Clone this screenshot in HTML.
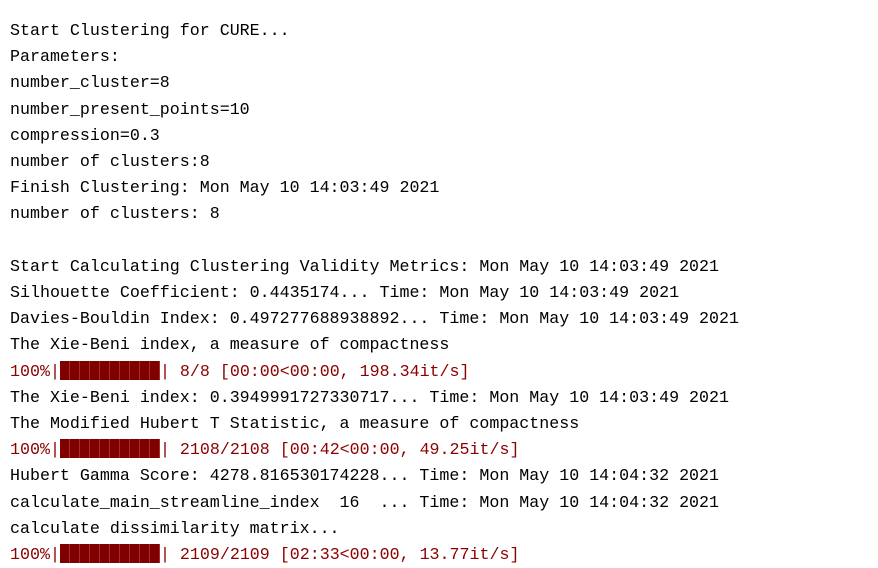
<!DOCTYPE html><html><head><style>
body{margin:0;background:#fff;width:878px;height:566px;overflow:hidden}
pre{margin:0;position:absolute;left:10px;top:18px;font-family:"Liberation Mono",monospace;font-size:16.65px;line-height:26.2px;color:#000}
.r{color:#8b0000}
.b{display:inline-block;width:100px;height:19px;vertical-align:-4px;background:repeating-linear-gradient(90deg,#800000 0,#800000 9px,#a03030 9px,#a03030 10px)}
</style></head><body><pre>Start Clustering for CURE...
Parameters:
number_cluster=8
number_present_points=10
compression=0.3
number of clusters:8
Finish Clustering: Mon May 10 14:03:49 2021
number of clusters: 8

Start Calculating Clustering Validity Metrics: Mon May 10 14:03:49 2021
Silhouette Coefficient: 0.4435174... Time: Mon May 10 14:03:49 2021
Davies-Bouldin Index: 0.497277688938892... Time: Mon May 10 14:03:49 2021
The Xie-Beni index, a measure of compactness
<span class="r">100%|<span class="b"></span>| 8/8 [00:00&lt;00:00, 198.34it/s]</span>
The Xie-Beni index: 0.3949991727330717... Time: Mon May 10 14:03:49 2021
The Modified Hubert T Statistic, a measure of compactness
<span class="r">100%|<span class="b"></span>| 2108/2108 [00:42&lt;00:00, 49.25it/s]</span>
Hubert Gamma Score: 4278.816530174228... Time: Mon May 10 14:04:32 2021
calculate_main_streamline_index  16  ... Time: Mon May 10 14:04:32 2021
calculate dissimilarity matrix...
<span class="r">100%|<span class="b"></span>| 2109/2109 [02:33&lt;00:00, 13.77it/s]</span></pre></body></html>
